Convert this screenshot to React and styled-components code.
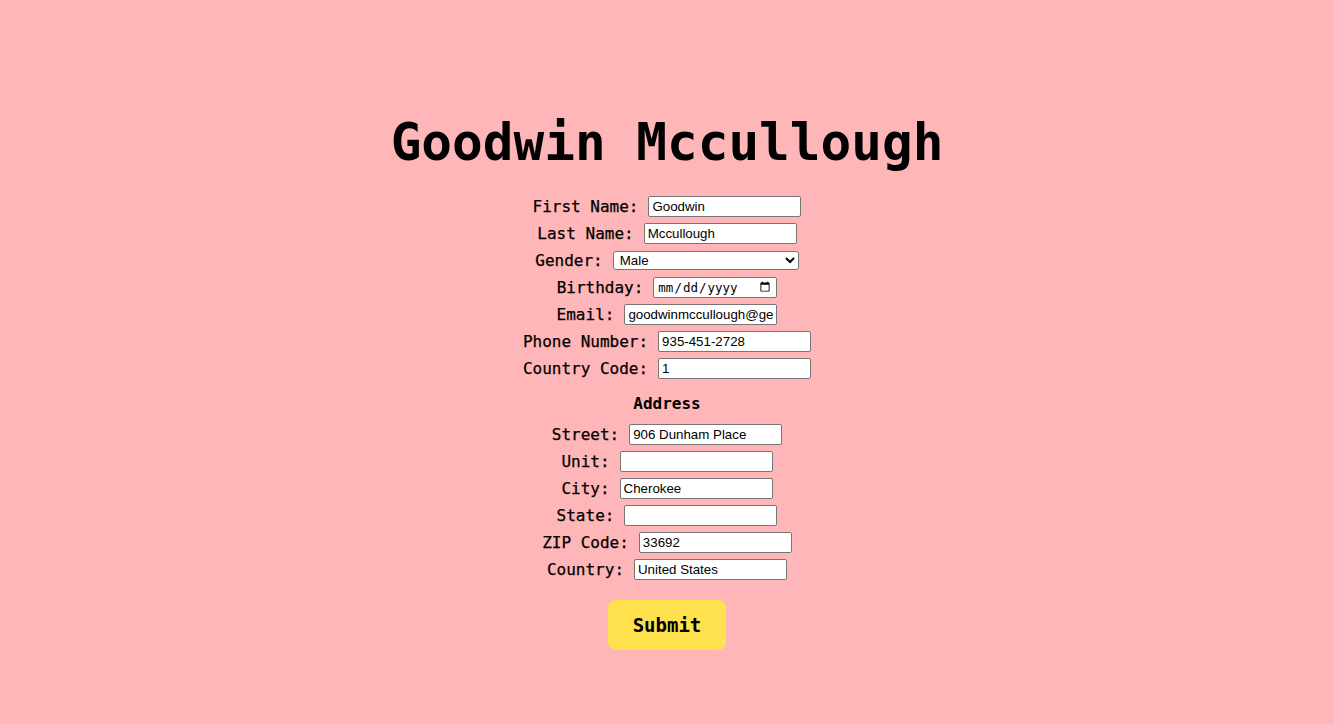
import React from "react";
import styled, { createGlobalStyle } from "styled-components";

const GlobalStyle = createGlobalStyle`
  html, body {
    margin: 0;
    padding: 0;
    background: #ffb6b8;
  }
`;

const Page = styled.div`
  min-height: 724px;
  background: #ffb6b8;
  display: flex;
  flex-direction: column;
  align-items: center;
  padding-top: 108px;
  box-sizing: border-box;
  font-family: "DejaVu Sans Mono", "Liberation Mono", monospace;
  color: #000;
`;

const Title = styled.h1`
  margin: 0 0 15px;
  font-size: 51px;
  font-weight: 700;
  line-height: 70px;
  letter-spacing: 0;
`;

const Form = styled.form`
  display: flex;
  flex-direction: column;
  align-items: center;
`;

const Row = styled.div`
  height: 27px;
  display: flex;
  align-items: center;
  justify-content: center;
  gap: 10px;
  font-size: 16px;
  font-weight: 500;
`;

const Label = styled.label`
  white-space: pre;
  -webkit-text-stroke: 0.25px #000;
`;

const TextInput = styled.input`
  box-sizing: border-box;
  width: ${(p) => p.$w || 153}px;
  height: 21px;
  padding: 1px 3px;
  border: 1px solid #767676;
  border-radius: 2px;
  background: #fff;
  font-family: ${(p) =>
    p.$mono
      ? `"DejaVu Sans Mono", "Liberation Mono", monospace`
      : `"Liberation Sans", Arial, sans-serif`};
  font-size: ${(p) => (p.$mono ? 12.5 : 13.3)}px;
  color: #000;
`;

const Select = styled.select`
  box-sizing: border-box;
  width: 186px;
  height: 19px;
  padding: 0 2px;
  border: 1px solid #767676;
  border-radius: 3px;
  background: #fff;
  font-family: "Liberation Sans", Arial, sans-serif;
  font-size: 13.3px;
  color: #000;
`;

const Section = styled.h3`
  margin: 12px 0 7px;
  font-size: 16px;
  font-weight: 700;
  line-height: 20px;
`;

const Submit = styled.button`
  margin-top: 17px;
  width: 118px;
  height: 50px;
  border: none;
  border-radius: 8px;
  background: #ffe14d;
  font-family: "DejaVu Sans Mono", "Liberation Mono", monospace;
  font-size: 19px;
  font-weight: 700;
  color: #000;
  cursor: pointer;
`;

const personal = [
  { label: "First Name:", value: "Goodwin" },
  { label: "Last Name:", value: "Mccullough" },
  { label: "Gender:", kind: "select" },
  { label: "Birthday:", kind: "date" },
  { label: "Email:", value: "goodwinmccullough@geekology.com" },
  { label: "Phone Number:", value: "935-451-2728" },
  { label: "Country Code:", value: "1" },
];

const address = [
  { label: "Street:", value: "906 Dunham Place" },
  { label: "Unit:", value: "" },
  { label: "City:", value: "Cherokee" },
  { label: "State:", value: "" },
  { label: "ZIP Code:", value: "33692" },
  { label: "Country:", value: "United States" },
];

function Field({ field }) {
  let control;
  if (field.kind === "select") {
    control = (
      <Select defaultValue="Male">
        <option>Male</option>
        <option>Female</option>
        <option>Other</option>
      </Select>
    );
  } else if (field.kind === "date") {
    control = <TextInput type="date" $w={124} $mono />;
  } else {
    control = <TextInput type="text" defaultValue={field.value} />;
  }
  return (
    <Row>
      <Label>{field.label}</Label>
      {control}
    </Row>
  );
}

export default function App() {
  return (
    <Page>
      <GlobalStyle />
      <Title>Goodwin Mccullough</Title>
      <Form onSubmit={(e) => e.preventDefault()}>
        {personal.map((f) => (
          <Field key={f.label} field={f} />
        ))}
        <Section>Address</Section>
        {address.map((f) => (
          <Field key={f.label} field={f} />
        ))}
        <Submit type="submit">Submit</Submit>
      </Form>
    </Page>
  );
}
